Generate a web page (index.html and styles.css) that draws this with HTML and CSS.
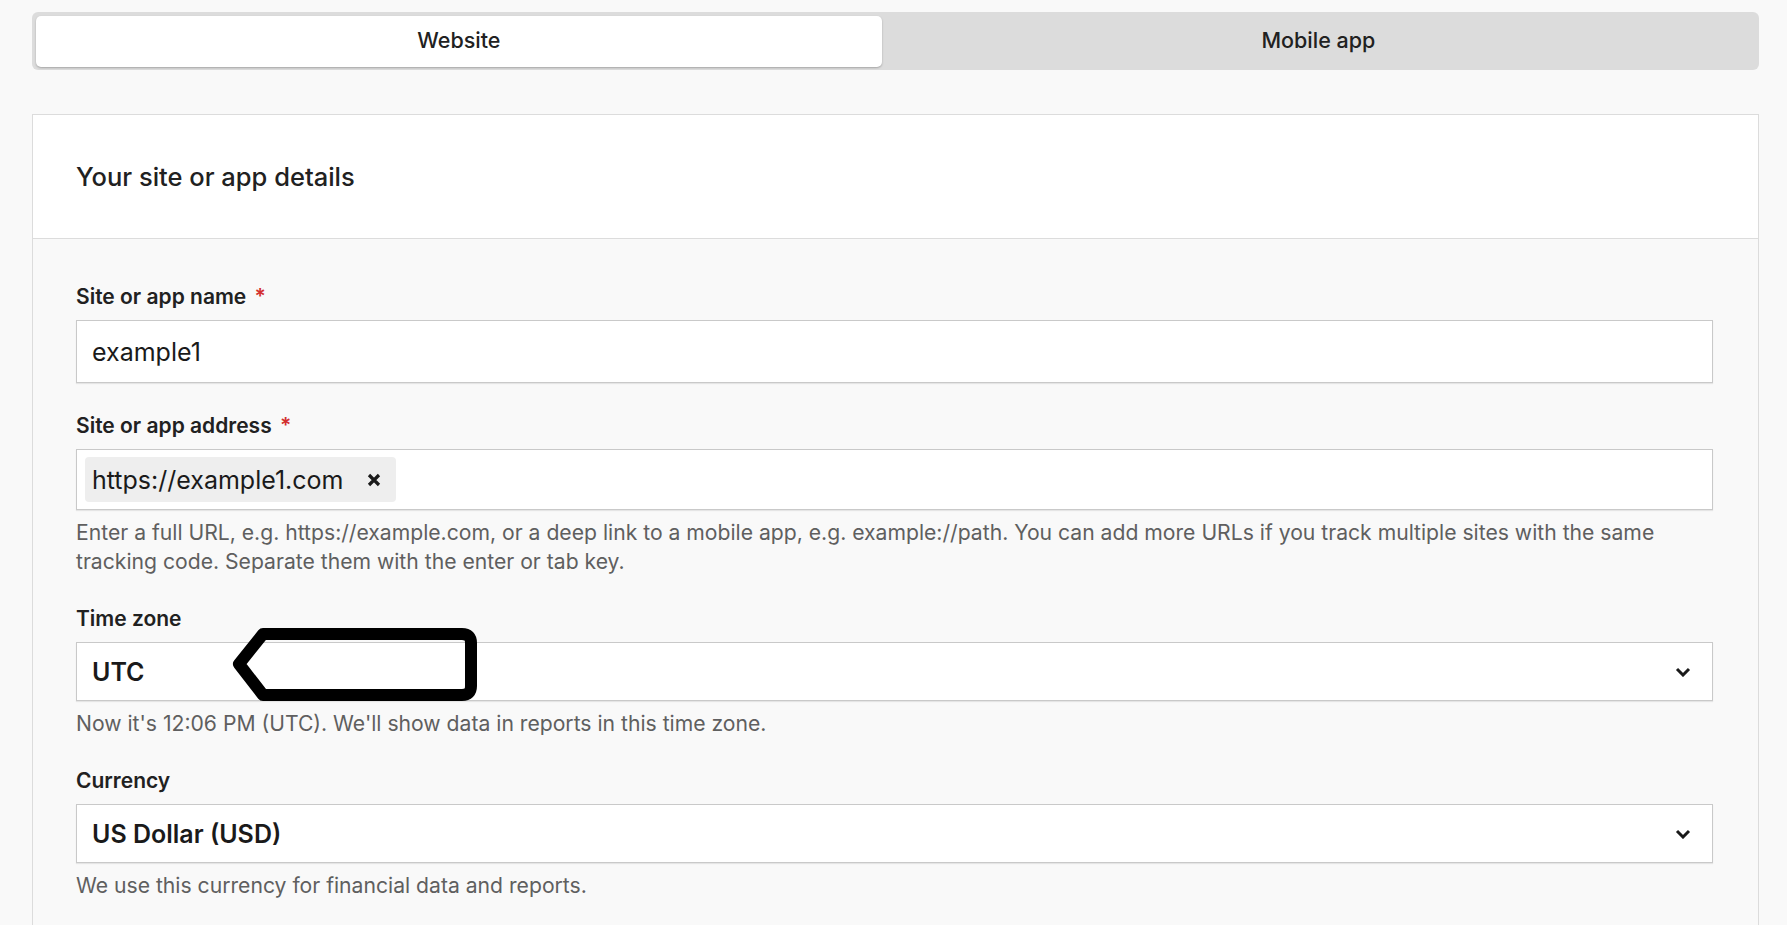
FILE: index.html
```html
<!DOCTYPE html>
<html lang="en">
<head>
  <meta charset="UTF-8" />
  <title>Add a website</title>
  <link rel="stylesheet" href="styles.css">
</head>
<body>
  <div class="page">

    <!-- type switch -->
    <div class="tabs">
      <button class="tab active">Website</button>
      <button class="tab">Mobile app</button>
    </div>

    <div class="card">
      <div class="card-head">
        <h2>Your site or app details</h2>
      </div>

      <div class="card-body">
        <div class="field">
          <label>Site or app name <span class="req">*</span></label>
          <div class="input text-input">example1</div>
        </div>

        <div class="field">
          <label>Site or app address <span class="req">*</span></label>
          <div class="input chips">
            <span class="chip">https://example1.com
              <svg class="chip-x" viewBox="0 0 16 16" width="16" height="16"><path d="M3 3l10 10M13 3L3 13" stroke="#1a1a1a" stroke-width="3.2"/></svg>
            </span>
          </div>
          <p class="help">Enter a full URL, e.g. https://example.com, or a deep link to a mobile app, e.g. example://path. You can add more URLs if you track multiple sites with the same tracking code. Separate them with the enter or tab key.</p>
        </div>

        <div class="field">
          <label>Time zone</label>
          <div class="input select">
            <span>UTC</span>
            <svg class="chevron" viewBox="0 0 16 10" width="16" height="10"><path d="M2 2l6 6 6-6" fill="none" stroke="#1a1a1a" stroke-width="3"/></svg>
            <!-- annotation drawn over the select -->
            <svg class="marker" viewBox="225 622 260 84" width="260" height="84">
              <path d="M263 633H462Q471 633 471 642V685Q471 694 462 694H263L239 663Z" fill="none" stroke="#000" stroke-width="12" stroke-linejoin="round"/>
            </svg>
          </div>
          <p class="help">Now it's 12:06 PM (UTC). We'll show data in reports in this time zone.</p>
        </div>

        <div class="field">
          <label>Currency</label>
          <div class="input select">
            <span>US Dollar (USD)</span>
            <svg class="chevron" viewBox="0 0 16 10" width="16" height="10"><path d="M2 2l6 6 6-6" fill="none" stroke="#1a1a1a" stroke-width="3"/></svg>
          </div>
          <p class="help">We use this currency for financial data and reports.</p>
        </div>
      </div>
    </div>

  </div>
</body>
</html>
```

FILE: styles.css
```css
body {
  margin: 0;
  background: #f9f9f9;
  color: #212121;
  font-family: Inter, "Liberation Sans", sans-serif;
  overflow: hidden;
}

.page {
  padding: 12px 28px 0 32px;
}

.tabs {
  display: flex;
  height: 58px;
  box-sizing: border-box;
  padding: 4px 4px 3px 4px;
  background: #dcdcdc;
  border-radius: 6px;
}

.tab {
  flex: 1 1 0;
  border: none;
  background: transparent;
  font-family: Inter, "Liberation Sans", sans-serif;
  font-size: 21.5px;
  font-weight: 500;
  color: #212121;
  padding: 0 0 3px;
  cursor: pointer;
}

.tab.active {
  flex: 0 0 49.2%;
  background: #fff;
  border-radius: 5px;
  box-shadow: 0 1px 2px rgba(0, 0, 0, 0.25);
}

.card {
  margin-top: 44px;
  border: 1px solid #dcdcdc;
  border-bottom: none;
  height: 820px;
}

.card-head {
  height: 123px;
  background: #fff;
  border-bottom: 1px solid #dcdcdc;
  display: flex;
  align-items: center;
  padding-left: 43px;
}

.card-head h2 {
  margin: 0;
  font-size: 25.5px;
  font-weight: 500;
}

.card-body {
  padding: 46px 45px 0 43px;
}

.field {
  margin-bottom: 31px;
}

.field label {
  display: block;
  font-size: 21px;
  line-height: 24px;
  font-weight: 600;
  margin-bottom: 11px;
}

.req {
  color: #d32f2f;
  margin-left: 3px;
}

.input {
  position: relative;
  background: #fff;
  border: 1px solid #c9c9c9;
  box-shadow: 0 1px 1px rgba(0, 0, 0, 0.08);
  box-sizing: border-box;
  font-size: 25px;
  color: #1a1a1a;
}

.text-input {
  height: 63px;
  display: flex;
  align-items: center;
  padding-left: 15px;
}

.chips {
  height: 61px;
  display: flex;
  align-items: center;
  padding-left: 8px;
}

.chip {
  display: flex;
  align-items: center;
  height: 45px;
  padding: 0 14px 0 7px;
  background: #eeeeee;
  border-radius: 4px;
}

.chip-x {
  display: block;
  margin-left: 22px;
}

.select {
  height: 59px;
  display: flex;
  align-items: center;
  justify-content: space-between;
  padding: 0 21px 0 15px;
  font-weight: 600;
}

.chevron {
  display: block;
}

.marker {
  position: absolute;
  left: 148px;
  top: -20px;
}

.help {
  margin: 8px 0 0;
  font-size: 21.15px;
  line-height: 29px;
  color: #5f5f5f;
}
```
